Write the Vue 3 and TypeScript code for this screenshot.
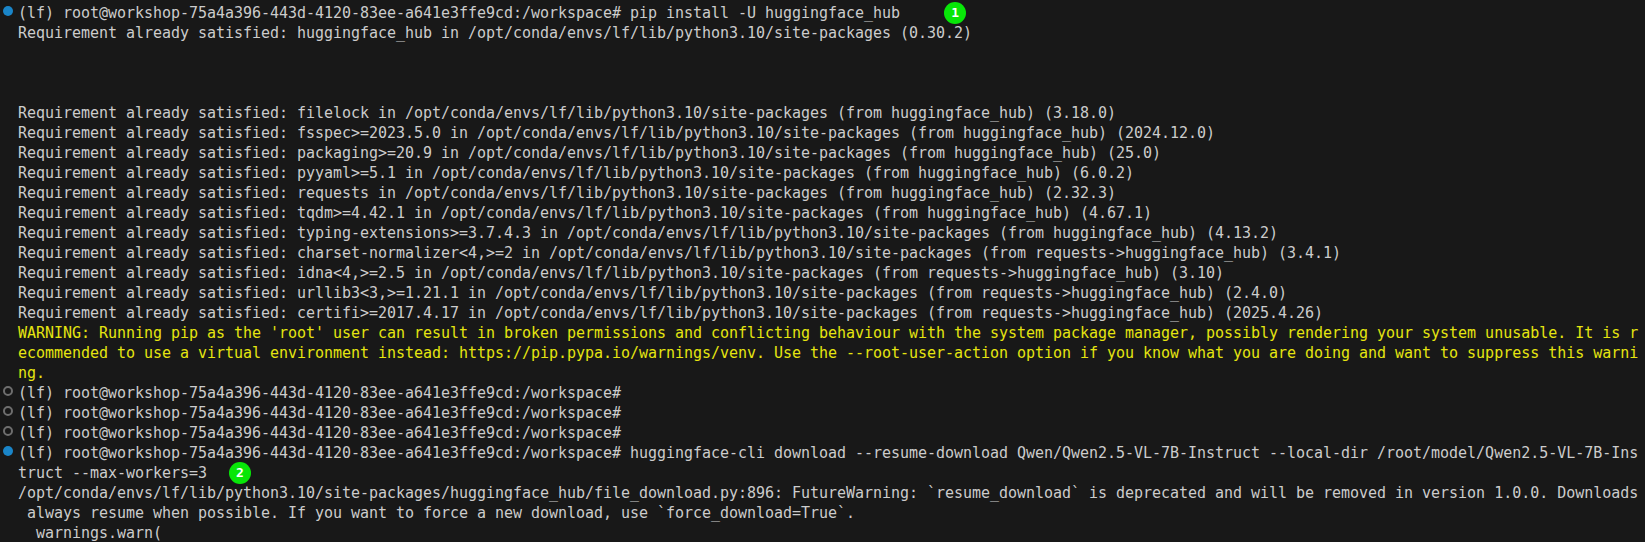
<script setup lang="ts">
type Row = { text?: string; dot?: 'blue' | 'gray'; warn?: boolean; badge?: number; badgeGap?: number }
const P = '(lf) root@workshop-75a4a396-443d-4120-83ee-a641e3ffe9cd:/workspace#'
const R = 'Requirement already satisfied: '
const S = '/opt/conda/envs/lf/lib/python3.10/site-packages'
const rows: Row[] = [
  { text: P + ' pip install -U huggingface_hub', dot: 'blue', badge: 1, badgeGap: 44 },
  { text: R + 'huggingface_hub in ' + S + ' (0.30.2)' },
  {}, {}, {},
  { text: R + 'filelock in ' + S + ' (from huggingface_hub) (3.18.0)' },
  { text: R + 'fsspec>=2023.5.0 in ' + S + ' (from huggingface_hub) (2024.12.0)' },
  { text: R + 'packaging>=20.9 in ' + S + ' (from huggingface_hub) (25.0)' },
  { text: R + 'pyyaml>=5.1 in ' + S + ' (from huggingface_hub) (6.0.2)' },
  { text: R + 'requests in ' + S + ' (from huggingface_hub) (2.32.3)' },
  { text: R + 'tqdm>=4.42.1 in ' + S + ' (from huggingface_hub) (4.67.1)' },
  { text: R + 'typing-extensions>=3.7.4.3 in ' + S + ' (from huggingface_hub) (4.13.2)' },
  { text: R + 'charset-normalizer<4,>=2 in ' + S + ' (from requests->huggingface_hub) (3.4.1)' },
  { text: R + 'idna<4,>=2.5 in ' + S + ' (from requests->huggingface_hub) (3.10)' },
  { text: R + 'urllib3<3,>=1.21.1 in ' + S + ' (from requests->huggingface_hub) (2.4.0)' },
  { text: R + 'certifi>=2017.4.17 in ' + S + ' (from requests->huggingface_hub) (2025.4.26)' },
  { text: "WARNING: Running pip as the 'root' user can result in broken permissions and conflicting behaviour with the system package manager, possibly rendering your system unusable. It is r", warn: true },
  { text: 'ecommended to use a virtual environment instead: https://pip.pypa.io/warnings/venv. Use the --root-user-action option if you know what you are doing and want to suppress this warni', warn: true },
  { text: 'ng.', warn: true },
  { text: P, dot: 'gray' },
  { text: P, dot: 'gray' },
  { text: P, dot: 'gray' },
  { text: P + ' huggingface-cli download --resume-download Qwen/Qwen2.5-VL-7B-Instruct --local-dir /root/model/Qwen2.5-VL-7B-Ins', dot: 'blue' },
  { text: 'truct --max-workers=3', badge: 2, badgeGap: 22 },
  { text: S + '/huggingface_hub/file_download.py:896: FutureWarning: `resume_download` is deprecated and will be removed in version 1.0.0. Downloads' },
  { text: ' always resume when possible. If you want to force a new download, use `force_download=True`.' },
  { text: '  warnings.warn(' }
]
</script>

<template>
  <main class="terminal">
    <div v-for="(row, i) in rows" :key="i" class="row">
      <span class="gutter">
        <i v-if="row.dot" class="dot" :class="row.dot"></i>
      </span>
      <span class="text" :class="{ warn: row.warn }">{{ row.text }}</span>
      <span v-if="row.badge" class="badge" :style="{ marginLeft: row.badgeGap + 'px' }">{{ row.badge }}</span>
    </div>
  </main>
</template>

<style scoped>
.terminal {
  width: 1645px;
  height: 542px;
  box-sizing: border-box;
  padding-top: 3px;
  background: #181818;
  color: #cccccc;
  font-family: "DejaVu Sans Mono", monospace;
  font-size: 15px;
  letter-spacing: -0.03px;
  line-height: 20px;
  overflow: hidden;
}
.row {
  display: flex;
  align-items: center;
  height: 20px;
}
.gutter {
  flex: none;
  width: 18px;
  height: 20px;
  display: flex;
  align-items: center;
  padding: 0 0 4px 3px;
  box-sizing: border-box;
}
.dot {
  display: block;
  box-sizing: border-box;
  width: 10px;
  height: 10px;
  border-radius: 50%;
}
.dot.blue {
  background: #1a85c8;
}
.dot.gray {
  border: 2px solid #6e6e6e;
}
.text {
  white-space: pre;
}
.warn {
  color: #e5e510;
}
.badge {
  flex: none;
  width: 22px;
  height: 22px;
  border-radius: 50%;
  background: #08e608;
  color: #ffffff;
  font-size: 13px;
  font-weight: 700;
  line-height: 22px;
  letter-spacing: 0;
  text-align: center;
}
</style>
